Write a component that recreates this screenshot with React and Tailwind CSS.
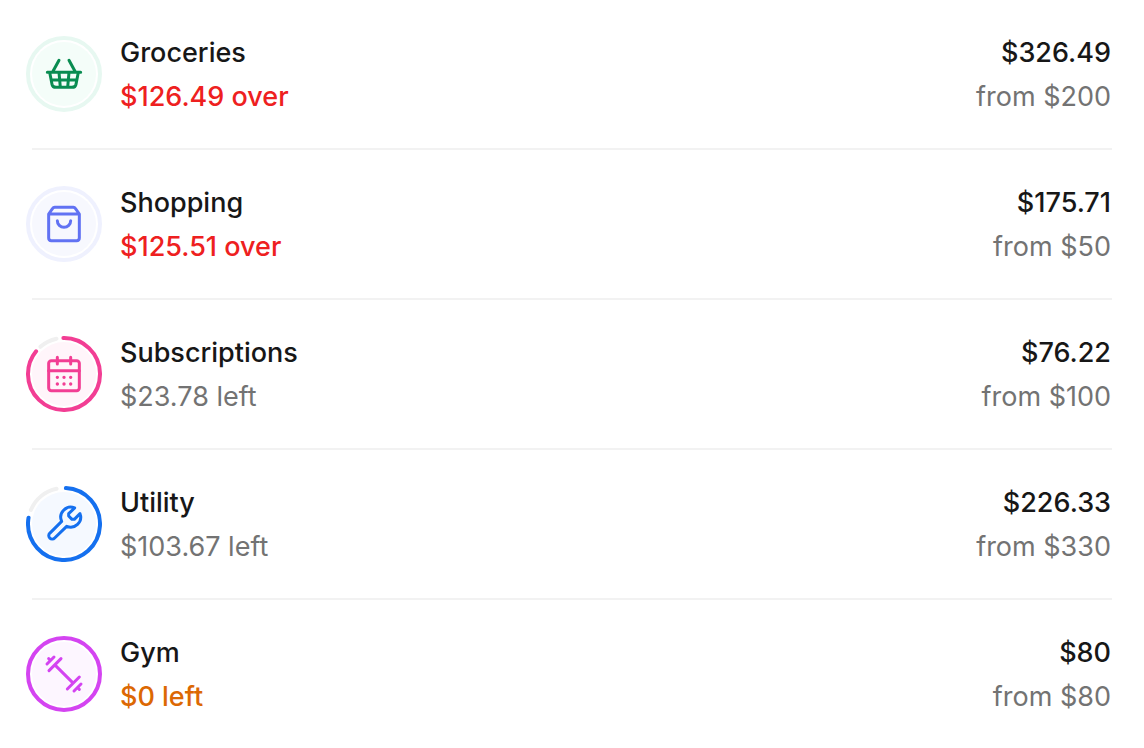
const categories = [
  { id: "groceries", name: "Groceries", note: "$126.49 over", noteClass: "font-medium text-[#ee2020]", spent: "$326.49", budget: "from $200", color: "#098c51", fill: "#f4fdf9", ring: "#e7f8f1", arc: null },
  { id: "shopping", name: "Shopping", note: "$125.51 over", noteClass: "font-medium text-[#ee2020]", spent: "$175.71", budget: "from $50", color: "#6172f3", fill: "#f7f8fe", ring: "#eff1fe", arc: null },
  { id: "subscriptions", name: "Subscriptions", note: "$23.78 left", noteClass: "text-[#737373]", spent: "$76.22", budget: "from $100", color: "#f23e94", fill: "#fff5fa", ring: "#f0f0f0", arc: { start: 359, end: 309, restStart: 319, restEnd: 348 } },
  { id: "utility", name: "Utility", note: "$103.67 left", noteClass: "text-[#737373]", spent: "$226.33", budget: "from $330", color: "#1570ef", fill: "#f5f9ff", ring: "#f0f0f0", arc: { start: 3, end: 280, restStart: 293, restEnd: 348 } },
  { id: "gym", name: "Gym", note: "$0 left", noteClass: "font-medium text-[#dc6803]", spent: "$80", budget: "from $80", color: "#d444f1", fill: "#fdf6ff", ring: "#d444f1", arc: null },
];

const glyphs = {
  groceries: (
    <path d="M100 145H200M107 145L114 181Q116 190 126 190H174Q184 190 186 181L193 145M112 168H188M135 145L139 190M165 145L161 190M135 109L117 142M165 109L183 142" />
  ),
  shopping: (
    <path d="M104 120L116 103Q118 100 122 100H178Q182 100 184 103L196 120V192Q196 200 188 200H112Q104 200 104 192ZM104 120H196M130 140A20 20 0 0 0 170 140" />
  ),
  subscriptions: (
    <>
      <rect x="104" y="110" width="92" height="90" rx="8" />
      <path d="M104 140H196M130 100V120M170 100V120" />
      <path strokeWidth="10" d="M130 160h.1M150 160h.1M170 160h.1M130 180h.1M150 180h.1M170 180h.1" />
    </>
  ),
  utility: (
    <path d="M182 102L164 119V126L174 136H181L198 119A30 30 0 0 1 158 157L122 192A10 10 0 0 1 107 178L143 142A30 30 0 0 1 182 102Z" />
  ),
  gym: (
    <path d="M124 124L176 176M105 140L141 104M160 195L196 159M99 120L120 99M180 201L201 180M104 104L108 108M192 192L196 196" />
  ),
};

function Arc({ start, end, color }) {
  const length = (end - start + 360) % 360;
  return (
    <circle cx="150" cy="150" r="108" pathLength="360" fill="none" stroke={color} strokeWidth="12" strokeLinecap="round" strokeDasharray={`${length} ${360 - length}`} transform={`rotate(${start - 90} 150 150)`} />
  );
}

function CategoryIcon({ category }) {
  const { id, color, fill, ring, arc } = category;
  return (
    <svg className="-ml-1.5 size-19 shrink-0" viewBox="36 36 228 228" aria-hidden="true">
      <circle cx="150" cy="150" r="96" fill={fill} />
      {arc ? (
        <>
          <Arc start={arc.restStart} end={arc.restEnd} color={ring} />
          <Arc start={arc.start} end={arc.end} color={color} />
        </>
      ) : (
        <circle cx="150" cy="150" r="108" fill="none" stroke={ring} strokeWidth="12" />
      )}
      <g fill="none" stroke={color} strokeWidth="9" strokeLinecap="round" strokeLinejoin="round">{glyphs[id]}</g>
    </svg>
  );
}

export default function App() {
  return (
    <main className="min-h-screen bg-white px-8 font-['Inter',sans-serif] text-[27px] leading-11 text-[#171717]">
      <ul className="divide-y-2 divide-[#f2f2f2]">
        {categories.map((category) => (
          <li key={category.id} className="flex items-center gap-4.5 py-[29px] last:pb-0">
            <CategoryIcon category={category} />
            <div className="min-w-0 flex-1 pt-0.5">
              <p className="font-medium">{category.name}</p>
              <p className={category.noteClass}>{category.note}</p>
            </div>
            <div className="pt-0.5 pr-px text-right">
              <p className="font-medium">{category.spent}</p>
              <p className="text-[#737373]">{category.budget}</p>
            </div>
          </li>
        ))}
      </ul>
    </main>
  );
}
